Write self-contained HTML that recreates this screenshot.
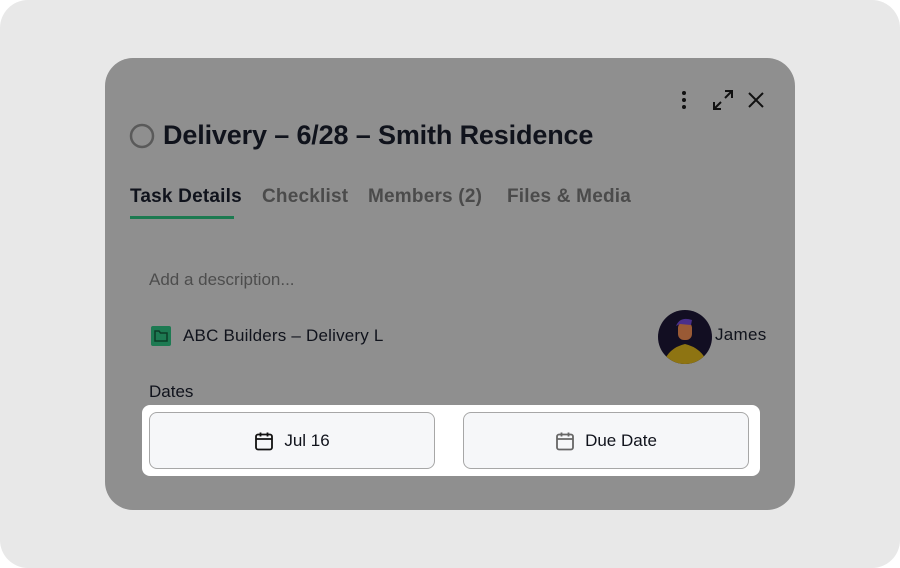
<!DOCTYPE html>
<html><head><style>
*{margin:0;padding:0;box-sizing:border-box}
html{background:#fff}
body{width:900px;height:568px;background:#e8e8e8;border-radius:28px;font-family:"Liberation Sans",Arial,sans-serif;position:relative;overflow:hidden}
.card{position:absolute;left:105px;top:58px;width:690px;height:452px;background:#8f8f8f;border-radius:28px}
.a{position:absolute;white-space:nowrap}
.title{left:163px;top:120px;font-size:27px;font-weight:bold;color:#10131c;letter-spacing:-0.15px}
.tab{top:186px;font-size:19px;font-weight:bold;color:#4b4b4b;letter-spacing:0.2px}
.btn{position:absolute;top:412px;width:286px;height:57px;background:#f6f7f9;border:1px solid #a7a7a7;border-radius:8px;display:flex;align-items:center;justify-content:center;font-size:17px;color:#10131c;gap:10px}
</style></head><body>
<div class="card"></div>
<svg class="a" style="left:676px;top:90px" width="16" height="20"><circle cx="8" cy="3" r="2" fill="#111"/><circle cx="8" cy="10" r="2" fill="#111"/><circle cx="8" cy="17" r="2" fill="#111"/></svg>
<svg class="a" style="left:711px;top:88px" width="24" height="24" fill="none" stroke="#111" stroke-width="2"><path d="M14 3h7v7M21 3l-7 7M3 14v7h7M3 21l7-7"/></svg>
<svg class="a" style="left:747px;top:91px" width="18" height="18" fill="none" stroke="#111" stroke-width="2"><path d="M2 2l14 14M16 2L2 16"/></svg>
<svg class="a" style="left:129px;top:123px" width="26" height="26"><circle cx="13" cy="13" r="11" fill="none" stroke="#5a5a5a" stroke-width="2.5"/></svg>
<div class="a title">Delivery – 6/28 – Smith Residence</div>
<div class="a tab" style="left:130px;color:#10131c">Task Details</div>
<div class="a" style="left:130px;top:216px;width:104px;height:3px;background:#1c7a50"></div>
<div class="a tab" style="left:262px">Checklist</div>
<div class="a tab" style="left:368px">Members (2)</div>
<div class="a tab" style="left:507px">Files &amp; Media</div>
<div class="a" style="left:149px;top:270px;font-size:17px;color:#4d4d4d">Add a description...</div>
<div class="a" style="left:151px;top:326px;width:20px;height:20px;background:#1d7a52;border-radius:2px"></div>
<svg class="a" style="left:154px;top:330px" width="14" height="12" fill="none" stroke="#0d3d28" stroke-width="1.5"><path d="M1 1h4l1.5 2H13v8H1z"/></svg>
<div class="a" style="left:183px;top:326px;font-size:17px;color:#10131c;letter-spacing:0.2px">ABC Builders – Delivery L</div>
<svg class="a" style="left:658px;top:310px" width="54" height="54"><clipPath id="c"><circle cx="27" cy="27" r="27"/></clipPath><g clip-path="url(#c)"><rect width="54" height="54" fill="#120e22"/><path d="M5 54 Q10 38 27 34 Q44 38 50 54z" fill="#8e7412"/><rect x="20" y="12" width="14" height="18" rx="6" fill="#9a5a35"/><path d="M18 16 Q22 6 34 10 L33 15 L22 14z" fill="#4a2f8a"/></g></svg>
<div class="a" style="left:715px;top:325px;font-size:17px;color:#10131c;letter-spacing:0.3px">James</div>
<div class="a" style="left:149px;top:382px;font-size:17px;color:#10131c">Dates</div>
<div class="a" style="left:142px;top:405px;width:618px;height:71px;background:#fff;border-radius:8px"></div>
<div class="btn" style="left:149px"><svg width="20" height="20" fill="none" stroke="#111" stroke-width="1.8"><rect x="2" y="3.5" width="16" height="15" rx="2"/><path d="M2 8h16M6.5 1.5v4M13.5 1.5v4"/></svg>Jul 16</div>
<div class="btn" style="left:463px"><svg width="20" height="20" fill="none" stroke="#666" stroke-width="1.8"><rect x="2" y="3.5" width="16" height="15" rx="2"/><path d="M2 8h16M6.5 1.5v4M13.5 1.5v4"/></svg>Due Date</div>
</body></html>
